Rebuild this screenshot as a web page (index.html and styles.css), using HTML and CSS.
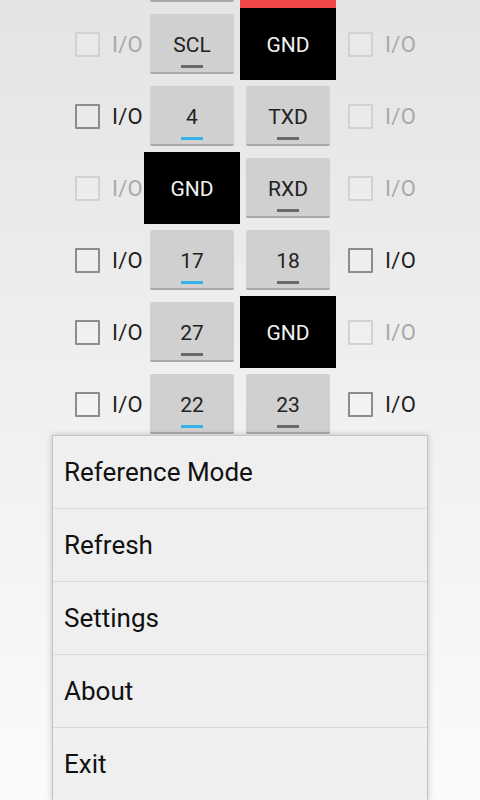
FILE: index.html
```html
<!DOCTYPE html>
<html>
<head>
<meta charset="utf-8">
<link rel="stylesheet" href="styles.css">
</head>
<body>
<div class="screen">
  <div class="pins">
    <div class="row">
      <div class="io left off"><span class="box"></span></div>
      <div class="cell"><div class="btn"><i class="bar"></i></div></div>
      <div class="cell power"></div>
      <div class="io right off"><span class="box"></span></div>
    </div>
    <div class="row">
      <div class="io left off"><span class="box"></span><span class="lbl">I/O</span></div>
      <div class="cell"><div class="btn">SCL<i class="bar"></i></div></div>
      <div class="cell gnd">GND</div>
      <div class="io right off"><span class="box"></span><span class="lbl">I/O</span></div>
    </div>
    <div class="row">
      <div class="io left"><span class="box"></span><span class="lbl">I/O</span></div>
      <div class="cell"><div class="btn">4<i class="bar blue"></i></div></div>
      <div class="cell"><div class="btn">TXD<i class="bar"></i></div></div>
      <div class="io right off"><span class="box"></span><span class="lbl">I/O</span></div>
    </div>
    <div class="row">
      <div class="io left off"><span class="box"></span><span class="lbl">I/O</span></div>
      <div class="cell gnd">GND</div>
      <div class="cell"><div class="btn">RXD<i class="bar"></i></div></div>
      <div class="io right off"><span class="box"></span><span class="lbl">I/O</span></div>
    </div>
    <div class="row">
      <div class="io left"><span class="box"></span><span class="lbl">I/O</span></div>
      <div class="cell"><div class="btn">17<i class="bar blue"></i></div></div>
      <div class="cell"><div class="btn">18<i class="bar"></i></div></div>
      <div class="io right"><span class="box"></span><span class="lbl">I/O</span></div>
    </div>
    <div class="row">
      <div class="io left"><span class="box"></span><span class="lbl">I/O</span></div>
      <div class="cell"><div class="btn">27<i class="bar"></i></div></div>
      <div class="cell gnd">GND</div>
      <div class="io right off"><span class="box"></span><span class="lbl">I/O</span></div>
    </div>
    <div class="row">
      <div class="io left"><span class="box"></span><span class="lbl">I/O</span></div>
      <div class="cell"><div class="btn">22<i class="bar blue"></i></div></div>
      <div class="cell"><div class="btn">23<i class="bar"></i></div></div>
      <div class="io right"><span class="box"></span><span class="lbl">I/O</span></div>
    </div>
  </div>
  <div class="menu">
    <div class="item">Reference Mode</div>
    <div class="item">Refresh</div>
    <div class="item">Settings</div>
    <div class="item">About</div>
    <div class="item">Exit</div>
  </div>
</div>
</body>
</html>
```
FILE: styles.css
```css
html, body {
  margin: 0;
  padding: 0;
}
body {
  width: 480px;
  height: 800px;
  overflow: hidden;
  font-family: Roboto, "Noto Sans", sans-serif;
}
.screen {
  position: relative;
  width: 480px;
  height: 800px;
  overflow: hidden;
  background: linear-gradient(#e4e4e4 0%, #efefef 45%, #fbfbfb 100%);
}
.pins {
  margin-top: -64px;
  display: flex;
  flex-direction: column;
}
.row {
  display: grid;
  grid-template-columns: 144px 96px 96px 144px;
  height: 72px;
}
.io {
  display: flex;
  align-items: center;
  gap: 12px;
  font-size: 22px;
  color: #1e1e1e;
}
.io.left {
  justify-content: flex-end;
  padding-right: 1px;
}
.io.right {
  padding-left: 12px;
}
.box {
  width: 21px;
  height: 21px;
  border: 2px solid #8c8c8c;
  border-radius: 1px;
  background: rgba(255,255,255,0.15);
}
.io.off {
  color: #a9a9a9;
}
.io.off .box {
  border-color: #d2d2d2;
}
.lbl {
  letter-spacing: 0.3px;
}
.cell {
  display: flex;
  padding: 6px;
  box-sizing: border-box;
}
.btn {
  position: relative;
  flex: 1;
  display: flex;
  align-items: center;
  justify-content: center;
  background: #d0d0d0;
  border-radius: 2px;
  border-bottom: 2px solid #a9a9a9;
  font-size: 21px;
  color: #222;
  padding-top: 3px;
}
.bar {
  position: absolute;
  left: 50%;
  bottom: 4px;
  width: 22px;
  height: 3px;
  margin-left: -11px;
  background: #6a6a6a;
}
.bar.blue {
  background: #33b5e5;
}
.cell.gnd {
  background: #000;
  color: #f2f2f2;
  font-size: 21px;
  align-items: center;
  justify-content: center;
  padding-top: 7px;
}
.cell.power {
  background: #f04848;
}
.menu {
  position: absolute;
  left: 52px;
  top: 435px;
  width: 376px;
  background: #efefef;
  border: 1px solid #c4c4c4;
  border-bottom: none;
  box-shadow: 0 0 6px rgba(0,0,0,0.22);
  box-sizing: border-box;
}
.item {
  height: 72px;
  display: flex;
  align-items: center;
  padding-left: 11px;
  font-size: 26px;
  color: #111;
  border-bottom: 1px solid #d9d9d9;
}
```
